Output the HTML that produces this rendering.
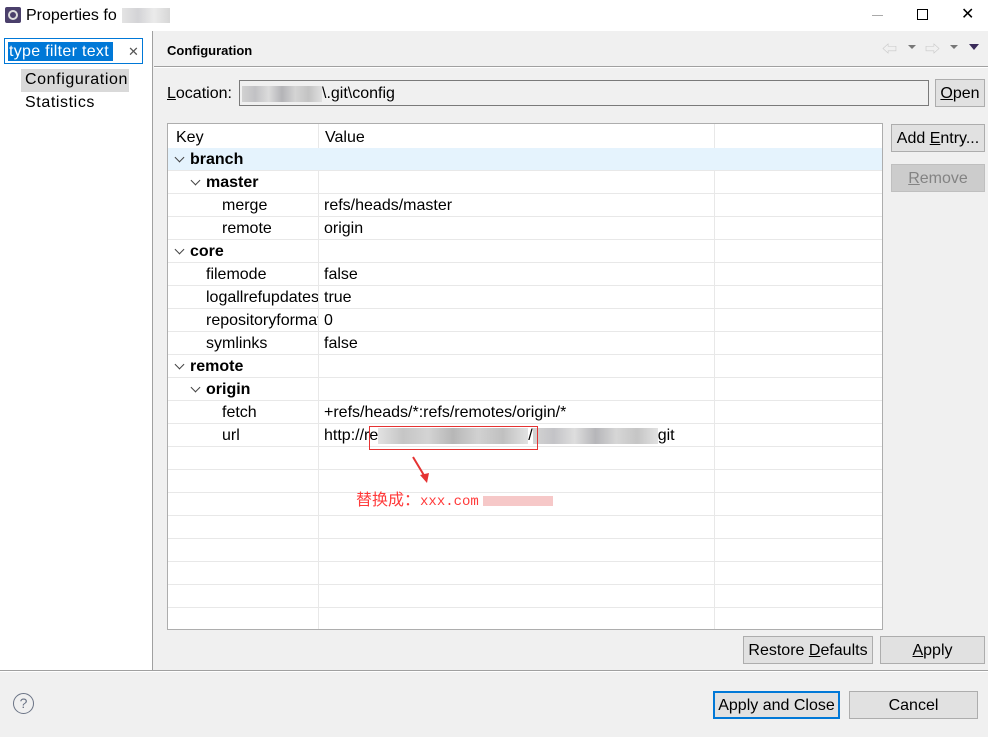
<!DOCTYPE html>
<html><head><meta charset="utf-8"><style>
*{margin:0;padding:0;box-sizing:border-box}
body{width:988px;height:737px;position:relative;overflow:hidden;background:#f0f0f0;font-family:"Liberation Sans","Noto Sans CJK SC",sans-serif;font-size:16px;color:#000}
.a{position:absolute}
.btn{position:absolute;background:#e1e1e1;border:1px solid #adadad;text-align:center;font-size:16px;line-height:28px;color:#000}
.row{position:absolute;left:168px;width:714px;height:23px;border-bottom:1px solid #e8e8e8;line-height:24px}
.k{position:absolute;top:0;white-space:nowrap}
.v{position:absolute;left:156px;top:0;white-space:nowrap}
.b{font-weight:bold}
.chev{position:absolute;top:3px;width:7px;height:7px;border-right:1.6px solid #444;border-bottom:1.6px solid #444;transform:rotate(45deg)}
.blur{display:inline-block;height:16px;vertical-align:middle;background:linear-gradient(90deg,#ccc,#b9b9bd,#d8d8d8,#a9a9ad,#cfcfcf,#bbb,#ddd);opacity:.85}
</style></head><body>
<div class="a" style="left:0;top:0;width:988px;height:31px;background:#fff"></div>
<div class="a" style="left:5px;top:7px;width:16px;height:16px;background:#4a3f6b;border-radius:2px"></div>
<div class="a" style="left:8px;top:10px;width:10px;height:10px;border:2px solid #ddd;border-radius:50%"></div>
<div class="a" style="left:26px;top:7px;font-size:16px">Properties fo</div>
<div class="a" style="left:122px;top:8px;width:48px;height:15px;background:linear-gradient(90deg,#ddd,#c8c8cc,#e6e6e6,#ccc);opacity:.8"></div>
<div class="a" style="left:872px;top:15px;width:11px;height:1px;background:#aaa"></div>
<div class="a" style="left:917px;top:9px;width:11px;height:11px;border:1px solid #000"></div>
<div class="a" style="left:961px;top:6px;font-size:16px;line-height:18px">✕</div>
<div class="a" style="left:0;top:31px;width:153px;height:639px;background:#fff;border-right:1px solid #a0a0a0"></div>
<div class="a" style="left:4px;top:38px;width:139px;height:26px;border:1px solid #0078d7;background:#fff"></div>
<div class="a" style="left:8px;top:42px;width:105px;height:19px;background:#0078d7;color:#fff;padding:0 1px;line-height:20px;font-size:16px;white-space:nowrap;letter-spacing:0.3px">type filter text</div>
<div class="a" style="left:128px;top:44px;color:#555;font-size:13px">✕</div>
<div class="a" style="left:21px;top:69px;width:108px;height:23px;background:#d9d9d9"></div>
<div class="a" style="left:25px;top:71px;letter-spacing:0.6px">Configuration</div>
<div class="a" style="left:25px;top:94px;letter-spacing:0.6px">Statistics</div>
<div class="a b" style="left:167px;top:43px;font-size:13px">Configuration</div>
<div class="a" style="left:154px;top:66px;width:834px;height:1px;background:#a0a0a0"></div>
<div class="a" style="left:154px;top:67px;width:834px;height:1px;background:#fff"></div>
<div class="a" style="left:882px;top:38px;font-size:15px;color:#c8c8c8">⇦</div>
<div class="a" style="left:908px;top:45px;width:0;height:0;border:4px solid transparent;border-top:4px solid #777"></div>
<div class="a" style="left:925px;top:38px;font-size:15px;color:#c8c8c8">⇨</div>
<div class="a" style="left:950px;top:45px;width:0;height:0;border:4px solid transparent;border-top:4px solid #777"></div>
<div class="a" style="left:969px;top:44px;width:0;height:0;border:5px solid transparent;border-top:6px solid #3a2b5a"></div>
<div class="a" style="left:167px;top:85px"><u>L</u>ocation:</div>
<div class="a" style="left:239px;top:80px;width:690px;height:26px;border:1px solid #7a7a7a;background:#f0f0f0"></div>
<div class="a" style="left:242px;top:85px;white-space:nowrap"><span class="blur" style="width:80px"></span>\.git\config</div>
<div class="btn" style="left:935px;top:79px;width:50px;height:28px"><u>O</u>pen</div>
<div class="a" style="left:167px;top:123px;width:716px;height:507px;border:1px solid #adadad;background:#fff"></div>
<div class="a" style="left:318px;top:124px;width:1px;height:505px;background:#e8e8e8"></div>
<div class="a" style="left:714px;top:124px;width:1px;height:505px;background:#e8e8e8"></div>
<div class="a" style="left:176px;top:129px">Key</div>
<div class="a" style="left:325px;top:129px">Value</div>
<div class="row" style="top:148px;background:#e5f3fd"><span class="chev" style="left:8px;top:6px"></span><span class="k b" style="left:22px">branch</span></div>
<div class="row" style="top:171px"><span class="chev" style="left:24px;top:6px"></span><span class="k b" style="left:38px">master</span></div>
<div class="row" style="top:194px"><span class="k" style="left:54px">merge</span><span class="v">refs/heads/master</span></div>
<div class="row" style="top:217px"><span class="k" style="left:54px">remote</span><span class="v">origin</span></div>
<div class="row" style="top:240px"><span class="chev" style="left:8px;top:6px"></span><span class="k b" style="left:22px">core</span></div>
<div class="row" style="top:263px"><span class="k" style="left:38px">filemode</span><span class="v">false</span></div>
<div class="row" style="top:286px"><span class="k" style="left:38px;width:112px;overflow:hidden">logallrefupdates</span><span class="v">true</span></div>
<div class="row" style="top:309px"><span class="k" style="left:38px;width:112px;overflow:hidden">repositoryformatversion</span><span class="v">0</span></div>
<div class="row" style="top:332px"><span class="k" style="left:38px">symlinks</span><span class="v">false</span></div>
<div class="row" style="top:355px"><span class="chev" style="left:8px;top:6px"></span><span class="k b" style="left:22px">remote</span></div>
<div class="row" style="top:378px"><span class="chev" style="left:24px;top:6px"></span><span class="k b" style="left:38px">origin</span></div>
<div class="row" style="top:401px"><span class="k" style="left:54px">fetch</span><span class="v">+refs/heads/*:refs/remotes/origin/*</span></div>
<div class="row" style="top:424px"><span class="k" style="left:54px">url</span><span class="v">http://re<span class="blur" style="width:150px;background:linear-gradient(90deg,#ddd,#bbb,#ccc,#aaa,#c9c9c9,#b5b5b5,#ddd)"></span>/<span class="blur" style="width:125px"></span>git</span></div>
<div class="row" style="top:447px"></div><div class="row" style="top:470px"></div><div class="row" style="top:493px"></div>
<div class="row" style="top:516px"></div><div class="row" style="top:539px"></div><div class="row" style="top:562px"></div>
<div class="row" style="top:585px"></div>
<div class="a" style="left:369px;top:426px;width:169px;height:24px;border:1px solid #e53333"></div>
<svg class="a" style="left:410px;top:455px" width="20" height="30"><line x1="3" y1="2" x2="15" y2="22" stroke="#e53333" stroke-width="2"/><polygon points="10,20 19,18 17,28" fill="#e53333"/></svg>
<div class="a" style="left:356px;top:486px;color:#ff3b3b;font-size:16px;white-space:nowrap">替换成：<span style="font-family:'Liberation Mono',monospace;font-size:14px">xxx.com</span><span style="display:inline-block;width:70px;height:10px;background:#f6c8c8;vertical-align:middle;margin-left:4px"></span></div>
<div class="btn" style="left:891px;top:124px;width:94px;height:28px">Add <u>E</u>ntry...</div>
<div class="btn" style="left:891px;top:164px;width:94px;height:28px;background:#cccccc;border-color:#bfbfbf;color:#838383"><u>R</u>emove</div>
<div class="btn" style="left:743px;top:636px;width:130px;height:28px">Restore <u>D</u>efaults</div>
<div class="btn" style="left:880px;top:636px;width:105px;height:28px"><u>A</u>pply</div>
<div class="a" style="left:0;top:670px;width:988px;height:1px;background:#a0a0a0"></div>
<div class="a" style="left:0;top:671px;width:988px;height:1px;background:#fff"></div>
<div class="a" style="left:13px;top:693px;width:21px;height:21px;border:1.5px solid #6a7385;border-radius:50%;text-align:center;line-height:18px;font-size:14px;color:#6a7385">?</div>
<div class="btn" style="left:713px;top:691px;width:127px;height:28px;border:2px solid #0078d7;line-height:26px">Apply and Close</div>
<div class="btn" style="left:849px;top:691px;width:129px;height:28px">Cancel</div>
</body></html>
